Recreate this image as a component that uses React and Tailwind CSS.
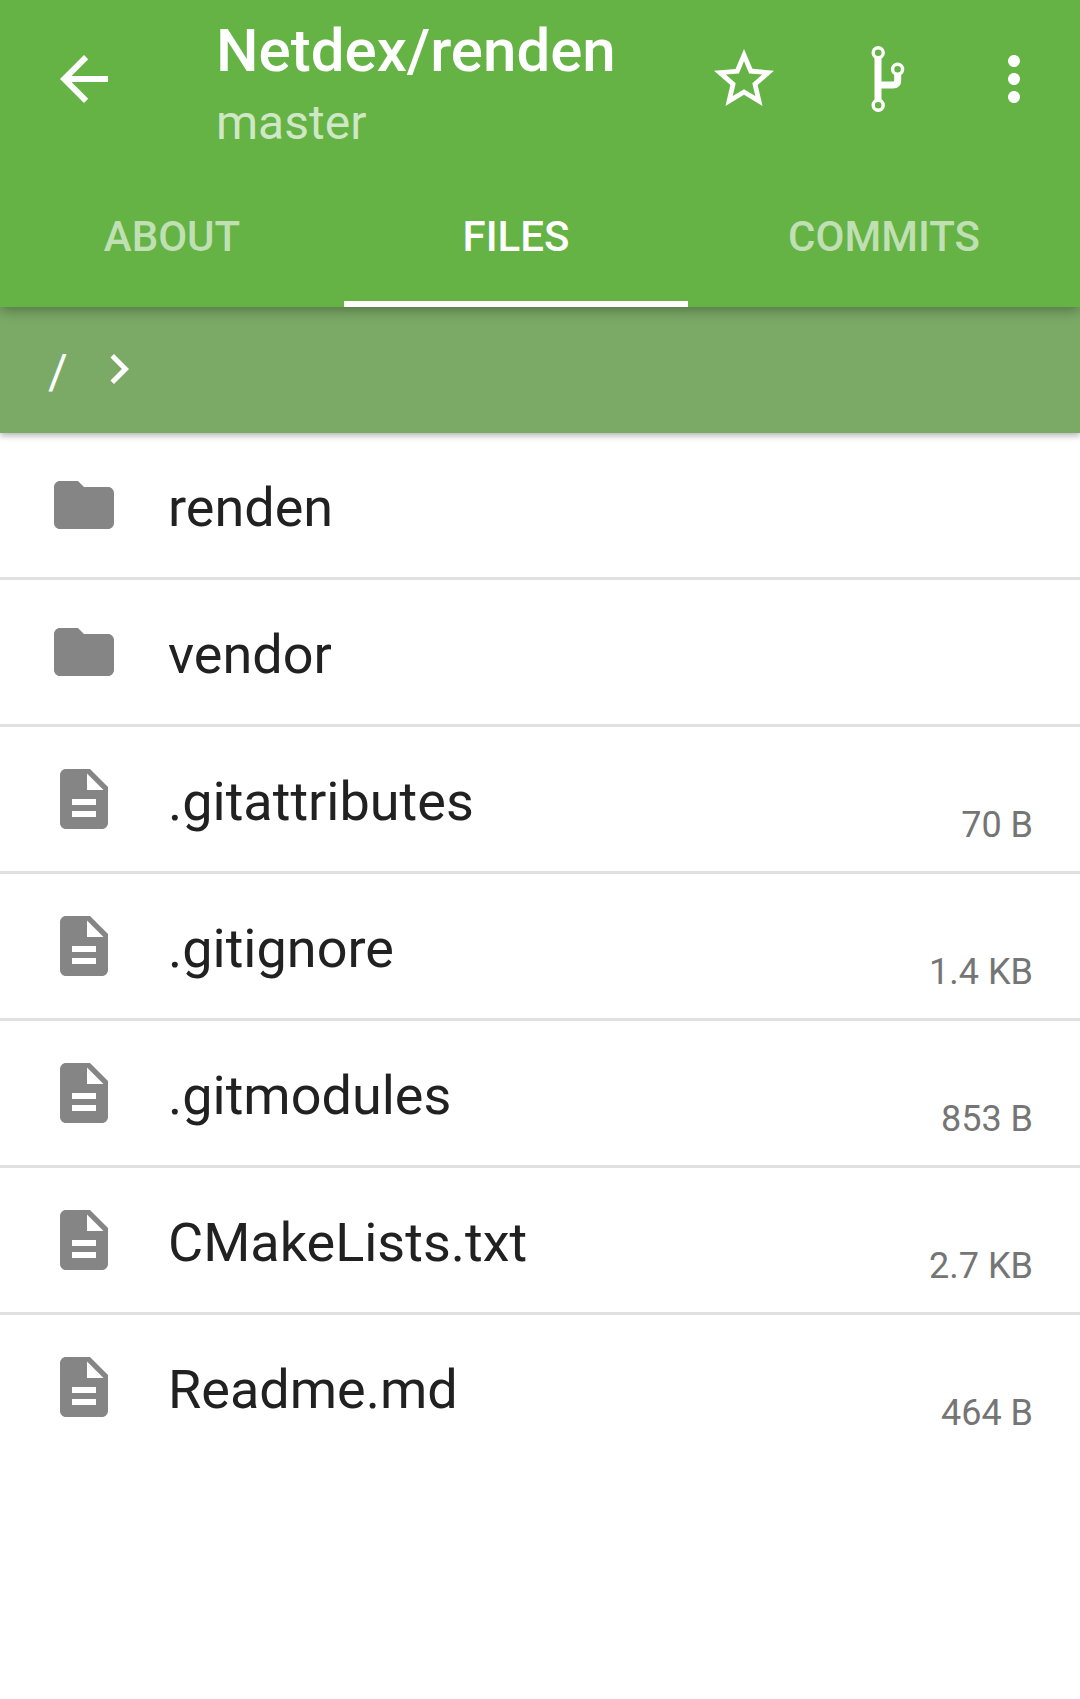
const entries = [
  { name: 'renden', folder: true },
  { name: 'vendor', folder: true },
  { name: '.gitattributes', size: '70 B' },
  { name: '.gitignore', size: '1.4 KB' },
  { name: '.gitmodules', size: '853 B' },
  { name: 'CMakeLists.txt', size: '2.7 KB' },
  { name: 'Readme.md', size: '464 B' },
];

function Icon({ d, className }) {
  return (
    <svg viewBox="0 0 24 24" fill="currentColor" className={className}>
      <path d={d} />
    </svg>
  );
}

const FOLDER = 'M10 4H4c-1.1 0-2 .9-2 2v12c0 1.1.9 2 2 2h16c1.1 0 2-.9 2-2V8c0-1.1-.9-2-2-2h-8l-2-2z';
const DOC = 'M14 2H6c-1.1 0-1.99.9-1.99 2L4 20c0 1.1.89 2 1.99 2H18c1.1 0 2-.9 2-2V8l-6-6zm2 16H8v-2h8v2zm0-4H8v-2h8v2zm-3-5V3.5L18.5 9H13z';
const BACK = 'M20 11H7.83l5.59-5.59L12 4l-8 8 8 8 1.41-1.41L7.83 13H20v-2z';
const STAR = 'M22 9.24l-7.19-.62L12 2 9.19 8.63 2 9.24l5.46 4.73L5.82 21 12 17.27 18.18 21l-1.63-7.03L22 9.24zM12 15.4l-3.76 2.27 1-4.28-3.32-2.88 4.38-.38L12 6.1l1.71 4.04 4.38.38-3.32 2.88 1 4.28L12 15.4z';
const MORE = 'M12 8c1.1 0 2-.9 2-2s-.9-2-2-2-2 .9-2 2 .9 2 2 2zm0 2c-1.1 0-2 .9-2 2s.9 2 2 2 2-.9 2-2-.9-2-2-2zm0 6c-1.1 0-2 .9-2 2s.9 2 2 2 2-.9 2-2-.9-2-2-2z';
const CHEVRON = 'M10 6L8.59 7.41 13.17 12l-4.58 4.59L10 18l6-6z';

function ForkIcon() {
  return (
    <svg viewBox="0 0 72 72" fill="none" stroke="white" className="size-[72px]">
      <path d="M26 15v48M26 42h15q4.700 0 4.700-4.700V31" strokeWidth="7" />
      <g fill="#65b345" strokeWidth="3.400">
        <circle cx="26.200" cy="9.700" r="5" />
        <circle cx="45.600" cy="26.300" r="5" />
        <circle cx="26.200" cy="62.300" r="5" />
      </g>
    </svg>
  );
}

export default function App() {
  return (
    <div className="flex h-[1699px] w-[1080px] flex-col overflow-hidden bg-white font-['Roboto',sans-serif]">
      <header className="relative z-20 h-[307px] shrink-0 bg-[#65b345] text-white shadow-[0_4px_12px_rgba(0,0,0,0.3)]">
        <div className="flex h-[168px] items-start pl-12 pr-[30px]">
          <Icon d={BACK} className="mt-[43px] size-[72px]" />
          <div className="ml-24 mt-[15px] grow">
            <h1 className="text-[60px] leading-[71px] font-medium">Netdex/renden</h1>
            <p className="mt-[9px] text-[48px] leading-[56px] text-white/70">master</p>
          </div>
          <div className="mt-[43px] flex">
            <Icon d={STAR} className="size-[72px]" />
            <div className="ml-[72px] mr-[54px]"><ForkIcon /></div>
            <Icon d={MORE} className="size-[72px]" />
          </div>
        </div>
        <nav className="grid h-[139px] grid-cols-[344px_344px_392px] text-center text-[42px] leading-[49px] font-medium">
          <div className="pt-[44px] text-white/60">ABOUT</div>
          <div className="border-b-6 border-white pt-[44px]">FILES</div>
          <div className="pt-[44px] text-white/60">COMMITS</div>
        </nav>
      </header>
      <div className="relative z-10 flex h-[126px] shrink-0 items-start bg-[#7baa67] pl-12 text-white shadow-[0_3px_6px_rgba(0,0,0,0.28)]">
        <span className="mt-[37px] text-[48px] leading-[56px]">/</span>
        <Icon d={CHEVRON} className="ml-[21px] mt-[31.5px] size-[60px]" />
      </div>
      <ul>
        {entries.map((e) => (
          <li key={e.name} className="flex h-[147px] items-start border-b-3 border-[#e0e0e0] pl-12 pr-[47px] last:border-transparent">
            <Icon d={e.folder ? FOLDER : DOC} className="mt-[36px] size-[72px] text-[#858585]" />
            <span className="ml-12 mt-[43px] grow text-[54px] leading-[63px] text-[#212121]">{e.name}</span>
            <span className="mt-[77px] text-[36px] leading-[42px] text-[#757575]">{e.size}</span>
          </li>
        ))}
      </ul>
    </div>
  );
}
